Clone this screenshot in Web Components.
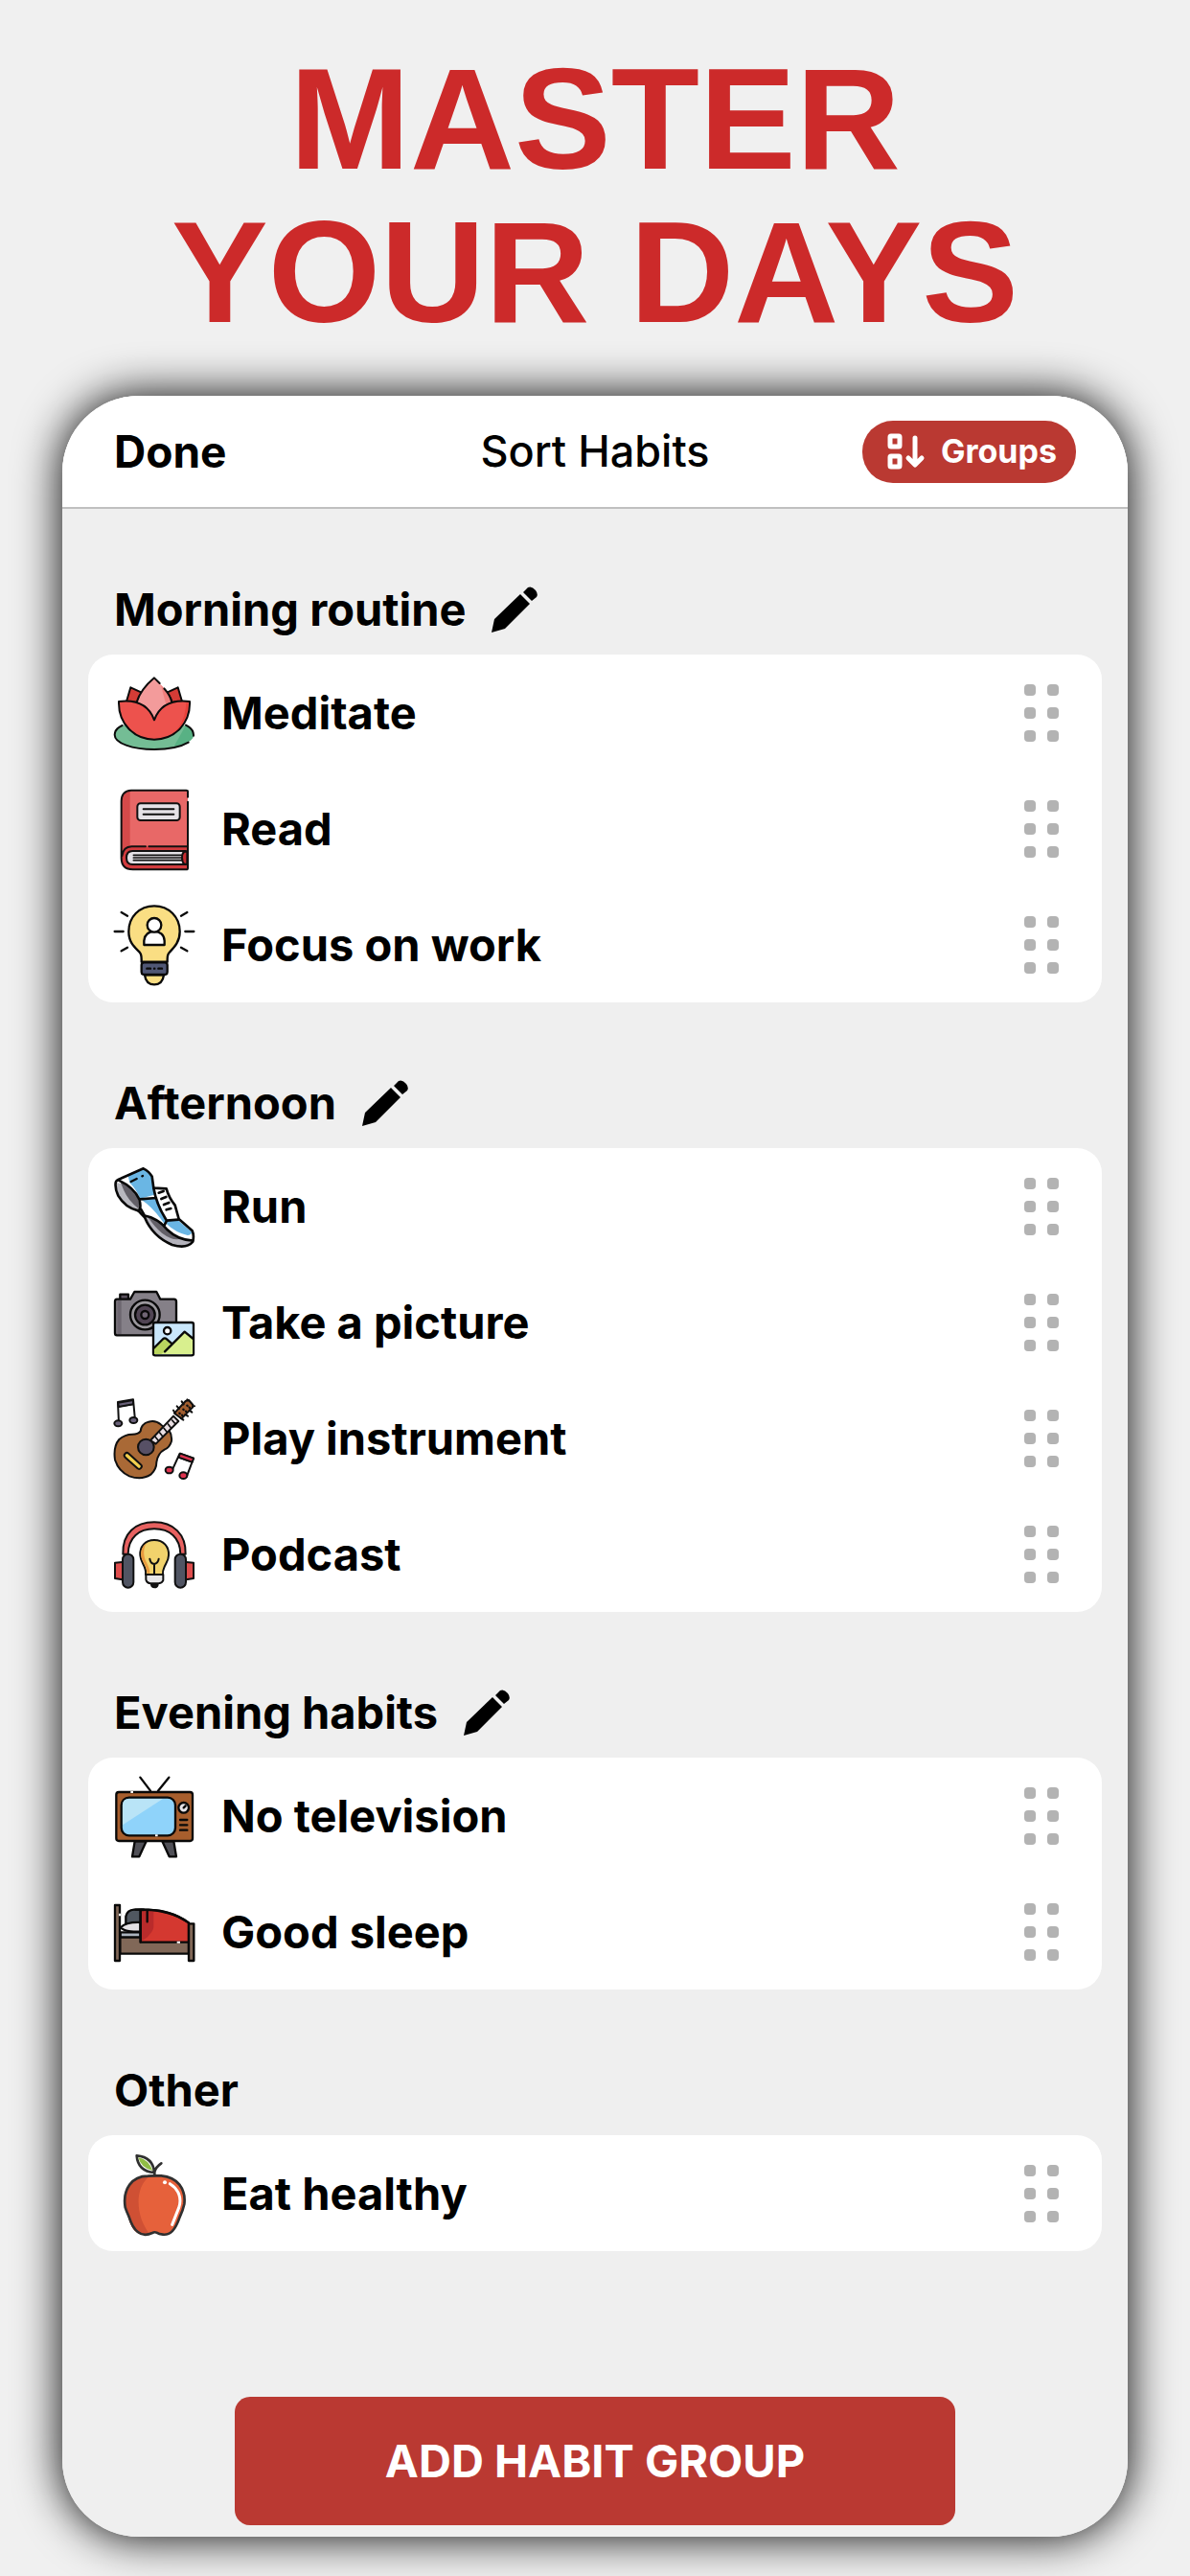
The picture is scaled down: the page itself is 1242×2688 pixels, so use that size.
<!DOCTYPE html>
<html lang="en">
<head>
<meta charset="utf-8">
<meta name="viewport" content="width=device-width, initial-scale=1">
<title>Master your days</title>
<style>
  body { margin: 0; background: #f0f0f0; color: #000; font-family: Inter, "Liberation Sans", sans-serif; }
</style>
</head>
<body>
<promo-page>
  <span slot="headline">MASTER<br>YOUR DAYS</span>
  <sort-bar heading="Sort Habits"></sort-bar>
  <habit-group name="Morning routine" editable>
    <habit-row icon="lotus">Meditate</habit-row>
    <habit-row icon="book">Read</habit-row>
    <habit-row icon="focus">Focus on work</habit-row>
  </habit-group>
  <habit-group name="Afternoon" editable>
    <habit-row icon="shoe">Run</habit-row>
    <habit-row icon="camera">Take a picture</habit-row>
    <habit-row icon="guitar">Play instrument</habit-row>
    <habit-row icon="podcast">Podcast</habit-row>
  </habit-group>
  <habit-group name="Evening habits" editable>
    <habit-row icon="tv">No television</habit-row>
    <habit-row icon="bed">Good sleep</habit-row>
  </habit-group>
  <habit-group name="Other">
    <habit-row icon="apple">Eat healthy</habit-row>
  </habit-group>
  <add-button>ADD HABIT GROUP</add-button>
</promo-page>

<script>
const RESET = `*{box-sizing:border-box} button{font:inherit;color:inherit;background:none;border:0;padding:0;margin:0;cursor:pointer}`;

const ICONS = {
lotus: ['57 32 252 252', `
  <g stroke="#0b0b0b" stroke-width="6" stroke-linejoin="round" stroke-linecap="round">
  <ellipse cx="183" cy="226" rx="124" ry="46" fill="#74bd95" stroke="none"/>
  <path d="M306 222C300 205 291 200 282 196L245 262C280 256 307 243 306 222Z" fill="#58b184" stroke="none"/>
  <path d="M290 250C266 264 228 272 183 272C114 272 59 252 59 226C59 214 68 204 83 197M282 196C298 204 307 214 306 229" fill="none"/>
  <path d="M96 122L109 78L150 97L135 125ZM270 122L257 78L216 97L231 125Z" fill="#d43c36"/>
  <path d="M200 65L183 48C158 69 138 92 128 124L183 182L238 124C234 108 226 95 214 82" fill="#f39b9b"/>
  <path d="M204 70C220 86 232 103 238 124L222 137C214 111 209 91 204 70Z" fill="#f07f7d" stroke="none"/>
  <path d="M214 82C226 95 234 108 238 124" fill="none"/>
  <path d="M72 122C122 116 165 130 183 180C201 130 244 116 294 122C297 193 244 241 183 241C122 241 70 193 72 122Z" fill="#ed524d"/>
  <path d="M283 126C281 169 266 204 240 222C272 204 289 166 289 126Z" fill="#e9413a" stroke="none"/></g>`],
book: ['57 395 252 252', `
  <path d="M110 400H288V648H115Q80 648 80 612V430Q82 402 110 400Z" fill="#e86867"/>
  <path d="M80 430Q82 402 107 400V580Q86 586 80 600Z" fill="#d64a4a"/>
  <path d="M288 577V648H115Q80 648 80 613Q80 577 112 577Z" fill="#d23b3e"/>
  <path d="M272 592H115Q96 592 96 611Q96 631 115 631H272Z" fill="#e4e2e7"/>
  <g fill="none" stroke="#111" stroke-width="6" stroke-linecap="round" stroke-linejoin="round">
  <path d="M288 421V404Q288 400 283 400H111Q80 402 80 434V612Q80 648 116 648H283Q288 648 288 643V436M82 605Q86 577 112 576H156M166 576H286M282 590H115Q96 590 96 611Q96 632 115 632H282"/>
  <path d="M118 603H268M118 611H268M118 619H268" stroke-width="5"/>
  <path d="M286 592H277Q270 597 270 611Q270 625 277 631H286Z" fill="#c52c30"/>
  <rect x="130" y="441" width="133" height="53" rx="10" fill="#e5e2e7"/>
  <path d="M149 459H244M149 475H244"/></g>`],
focus: ['57 759 252 252', `
  <g stroke="#090909" stroke-width="7" stroke-linecap="round" stroke-linejoin="round">
  <path d="M183 763C136 763 103 798 103 843C103 876 119 890 137 908Q143 914 143 930V938H224V930Q224 914 231 908C248 890 263 874 263 843C263 798 229 763 183 763Z" fill="#fade83"/>
  <path d="M153 979Q157 1009 183 1009Q209 1009 213 979Z" fill="#fade83"/>
  <rect x="143" y="940" width="81" height="38" rx="8" fill="#505775"/>
  <path d="M160 959H171M183 959H184M196 959H207" fill="none"/>
  <path d="M59 843H86M280 843H307M80 783L99 794M286 783L267 794M80 904L99 893M286 904L267 893" fill="none"/>
  <path d="M151 885V872C153 852 166 843 183 843C201 843 214 853 215 872V885Z" fill="#fff"/>
  <circle cx="183" cy="823" r="22" fill="#fff"/></g>`],
shoe: ['57 48 252 252', `
  <path d="M62 100Q64 91 78 86L148 54Q166 64 176 80L181 116L221 118L248 164L260 213L302 251Q309 270 303 286Q280 306 240 296Q180 270 153 210L133 187Q88 174 68 136Z" fill="#fff"/>
  <path d="M101 79L148 56Q169 67 175 83L182 113L183 137L139 149Q126 120 106 99Z" fill="#6ab6e4"/>
  <path d="M143 153L191 147L221 218L215 229Q180 177 143 153Z" fill="#6ab6e4"/>
  <path d="M222 220L257 217L301 254Q299 263 287 264Q250 256 222 229Z" fill="#6ab6e4"/>
  <path d="M65 99Q100 105 116 128Q136 150 133 184Q96 176 76 145Q61 120 65 99Z" fill="#b8b8bf"/>
  <path d="M76 95Q108 108 126 137Q139 157 134 181Q101 155 88 124Z" fill="#625f67"/>
  <path d="M154 207Q198 214 220 247Q253 278 303 285Q278 306 232 292Q179 268 154 207Z" fill="#b4b3bc"/>
  <path d="M166 210Q201 216 222 248Q239 264 268 274Q244 284 207 257Q181 235 166 210Z" fill="#625f67"/>
  <g fill="none" stroke="#080808" stroke-width="8" stroke-linecap="round" stroke-linejoin="round">
  <path d="M62 101Q61 92 78 86L149 55Q167 64 176 80L181 116L221 118Q228 145 248 170L260 213L302 250Q309 266 303 285Q285 307 239 294Q178 268 153 208L133 187Q92 178 70 140Q60 119 62 101Z"/>
  <path d="M72 92Q119 114 136 151Q144 180 133 187L141 182L153 203Q196 211 223 246Q258 279 304 281M138 151L189 147M181 116Q190 169 222 218L215 232M222 218L258 215"/>
  <path d="M197 131L212 126M205 150L220 144M213 168L229 162M221 184L235 180"/>
  <path d="M110 96L128 87M145 79L147 78" stroke-width="7"/></g>`],
camera: ['57 411 252 252', `
  <g stroke="#090909" stroke-width="7" stroke-linejoin="round">
  <path d="M76 464V449H102V464" fill="#59505c"/>
  <path d="M66 464H108L121 441H190L202 464H245Q252 464 252 472V570Q252 577 245 577H66Q60 577 60 570V472Q60 464 66 464Z" fill="#858088"/>
  <path d="M67 468H80V573H67Z" fill="#6d6670" stroke="none"/>
  <circle cx="154" cy="513" r="46" fill="#9b989d"/>
  <circle cx="154" cy="513" r="31" fill="#504453"/><circle cx="154" cy="513" r="12" fill="#706574"/>
  <rect x="180" y="537" width="126" height="103" rx="6" fill="#c9e7fb"/>
  <path d="M183 616L216 586L240 604L278 567L303 588V636H183Z" fill="#d8ef8e" stroke="none"/>
  <path d="M183 636V614L216 586L235 601L217 627L205 636Z" fill="#bad55f" stroke="none"/>
  <path d="M181 618L211 588Q216 584 222 589L239 604M216 628L278 566L305 588" fill="none" stroke-linecap="round"/>
  <circle cx="224" cy="563" r="11" fill="#fff"/></g>`],
guitar: ['57 55 252 252', `
  <g stroke="#101010" stroke-linejoin="round" stroke-linecap="round" stroke-width="6">
  <path d="M140 158Q142 136 165 129Q187 123 203 137Q215 149 229 155Q239 169 237 189Q232 208 215 216Q194 227 190 256Q190 278 172 294Q143 313 105 299Q70 283 60 247Q54 207 73 184Q91 168 114 168Q133 168 140 158Z" fill="#a96936"/>
  <path d="M171 187L243 111L259 127L188 198Z" fill="#e9dfe3"/>
  <path d="M186 176L196 188M200 163L209 174M213 149L222 160M226 136L235 147M239 124L248 134" stroke-width="5"/>
  <path d="M246 102L281 64L291 61L304 76L303 84L268 119Z" fill="#a25e2f"/>
  <path d="M248 101L243 93M261 88L254 80M275 74L269 65M289 62L286 59M266 117L274 123M280 106L288 111M293 93L301 99M303 80L309 80" fill="none"/>
  <path d="M262 102L263 103M274 90L275 91M286 78L287 79M270 108L271 109M282 96L283 97M293 84L294 85" stroke-width="7"/>
  <circle cx="157" cy="208" r="25" fill="#575065"/>
  <rect x="83" y="243" width="67" height="16" rx="8" fill="#f2cf4e" transform="rotate(42 116 251)"/>
  <path d="M72 134L69 67L117 59L123 124M70 81L118 73" fill="none"/>
  <path d="M70 69L117 61V74L71 82Z" fill="#686078"/>
  <ellipse cx="70" cy="134" rx="12" ry="9" fill="#686078"/><ellipse cx="118" cy="124" rx="12" ry="9" fill="#686078"/>
  <path d="M240 278L263 228L306 243L286 296M259 240L301 255" fill="none"/>
  <path d="M264 228L306 243L302 255L259 240Z" fill="#de344f"/>
  <ellipse cx="230" cy="280" rx="12" ry="10" fill="#de344f"/><ellipse cx="274" cy="297" rx="12" ry="10" fill="#de344f"/></g>`],
podcast: ['57 418 252 252', `
  <g stroke="#101010" stroke-width="6" stroke-linecap="round" stroke-linejoin="round">
  <path d="M85 543C83 477 124 443 183 443C242 443 283 480 281 543H265C264 491 231 464 183 464C135 464 102 491 101 543Z" fill="#e76160"/>
  <path d="M83 568L60 570V619L83 623M283 568L306 570V619L283 623" fill="#df4d4d"/>
  <rect x="84" y="543" width="34" height="105" rx="17" fill="#515563"/><rect x="248" y="543" width="34" height="105" rx="17" fill="#515563"/>
  <path d="M183 499C154 499 137 520 139 547C140 565 150 575 154 588Q157 596 156 607H210Q209 596 213 588C217 574 228 565 228 547C230 520 212 499 183 499Z" fill="#f1d26c"/>
  <path d="M161 507C142 519 137 540 145 561C153 576 160 585 160 603H169C170 582 153 567 151 545C150 526 153 515 161 507Z" fill="#e89a3f" stroke="none"/>
  <path d="M169 558Q171 573 183 574Q195 572 197 558M183 574V604" fill="none"/>
  <path d="M157 607H211V625Q208 634 197 635H170Q159 633 157 623Z" fill="#e8e7e9"/>
  <path d="M174 639H194Q192 647 184 647Q175 646 174 639Z" fill="#222"/></g>`],
tv: ['57 39 252 252', `
  <g stroke="#090909" stroke-width="7" stroke-linecap="round" stroke-linejoin="round">
  <path d="M171 86L139 44M195 86L229 44" fill="none"/>
  <path d="M122 244L114 292H136L158 244ZM208 244L230 292H252L244 244Z" fill="#505057"/>
  <rect x="64" y="90" width="239" height="153" rx="8" fill="#a75e2d"/>
  <rect x="80" y="107" width="169" height="119" rx="24" fill="#8fd3fa"/>
  <path d="M84 193V130Q85 111 104 111H210Z" fill="#b9e4f7" stroke="none"/>
  <circle cx="275" cy="139" r="16" fill="#e7e5e9"/><path d="M275 139L281 133" fill="none"/>
  <path d="M264 177H286M264 193H286M264 209H286" fill="none"/></g>
  <path d="M109 90H117M186 226H194" stroke="#fff" stroke-width="6"/>`],
bed: ['57 401 252 252', `
  <g stroke="#090909" stroke-width="7" stroke-linecap="round" stroke-linejoin="round">
  <path d="M76 543H291V595H76Z" fill="#816858"/>
  <path d="M77 528H140V543H77Z" fill="#abb4bf"/>
  <path d="M94 502V478Q98 459 120 457H150V502Z" fill="#505760"/>
  <path d="M140 497C114 496 89 501 78 513C90 526 114 526 140 526Z" fill="#e4e1e5"/>
  <path d="M140 459C199 453 249 468 291 498V559H140Z" fill="#d43830"/>
  <path d="M144 463H181V512C179 526 170 531 162 543L144 555Z" fill="#b92b2b" stroke="none"/>
  <path d="M140 460V558M161 460V495M124 457C193 454 246 466 291 498" fill="none"/>
  <path d="M60 443H75V617H60ZM291 501H307V617H291Z" fill="#816858"/></g>
  <path d="M75 469V477M254 559H264" stroke="#fff" stroke-width="6"/>`],
apple: ['57 232 252 252', `
  <path d="M184 301H213C260 310 286 349 278 392L259 447C244 488 219 495 184 480C148 495 121 486 107 448L90 397C83 345 113 306 153 304Z" fill="#e6613b"/>
  <path d="M168 304C111 304 83 350 90 397L107 448C118 482 143 491 169 485C145 454 132 418 134 374Q138 326 168 304Z" fill="#cf5034"/>
  <g fill="none" stroke="#303030" stroke-width="8" stroke-linecap="round" stroke-linejoin="round">
  <path d="M184 302H205C255 306 283 343 277 391Q273 410 263 431C248 474 233 488 210 486Q198 485 190 480Q184 477 177 481C140 499 117 472 104 431Q96 413 92 401C83 344 113 303 163 303Z"/>
  <path d="M184 301V290Q187 275 205 263M183 292Q180 244 128 239Q132 288 183 292Z"/></g>
  <path d="M133 245Q165 251 178 286Q142 279 133 245Z" fill="#91bd45"/>
  <path d="M232 327C260 344 270 374 260 402L239 455" fill="none" stroke="#fff" stroke-width="9" stroke-linecap="round"/><circle cx="216" cy="323" r="6" fill="#fff"/>`]
};

class PromoPage extends HTMLElement {
  constructor() {
    super();
    this.attachShadow({ mode: 'open' }).innerHTML = `
      <style>${RESET}
        :host { display: flex; flex-direction: column; }
        h1 { margin: 0; padding: 44px 16px 49px; text-align: center; color: #cc2a2a;
             font: 700 151px/160px "Liberation Sans", sans-serif; }
        .shade { margin: 0 65px 41px; border-radius: 80px; box-shadow: 0 0 48px #000; }
        main { border-radius: 80px; background: #efefef; overflow: hidden; }
      </style>
      <h1><slot name="headline"></slot></h1>
      <div class="shade"><main><slot></slot></main></div>`;
  }
}

class SortBar extends HTMLElement {
  constructor() {
    super();
    this.attachShadow({ mode: 'open' }).innerHTML = `
      <style>${RESET}
        :host { display: block; background: #fff; border-bottom: 2px solid #c0c0c0; }
        header { display: grid; grid-template-columns: 1fr auto 1fr; align-items: center;
                 height: 116px; padding: 0 54px; font-size: 46px; line-height: 56px; }
        .done { justify-self: start; font-weight: 700; }
        h2 { margin: 0; font-size: 45px; font-weight: 500; }
        .groups { justify-self: end; display: flex; align-items: center; gap: 16px; height: 65px;
                  padding: 0 20px 0 26px; border-radius: 32px; background: #ba3932; color: #fff;
                  font-size: 34px; font-weight: 700; line-height: 40px; }
        svg { display: block; width: 40px; height: 38px; }
      </style>
      <header>
        <button class="done">Done</button>
        <h2></h2>
        <button class="groups">
          <svg viewBox="0 0 40 38" fill="none" stroke="#fff" aria-hidden="true">
            <rect x="3" y="3" width="10" height="11" rx="1" stroke-width="5"/>
            <rect x="3" y="24" width="10" height="11" rx="1" stroke-width="5"/>
            <path d="M29 5V32M22 26L29 33L36 26" stroke-width="5" stroke-linecap="round" stroke-linejoin="round"/>
          </svg>Groups</button>
      </header>`;
  }
  connectedCallback() { this.shadowRoot.querySelector('h2').textContent = this.getAttribute('heading'); }
}

class HabitGroup extends HTMLElement {
  constructor() {
    super();
    this.attachShadow({ mode: 'open' }).innerHTML = `
      <style>${RESET}
        :host { display: block; padding: 0 27px; }
        .head { display: flex; align-items: center; gap: 27px; height: 152px; padding: 58px 27px 0; }
        h3 { margin: 0; font-size: 47px; font-weight: 700; line-height: 56px; }
        button { display: block; width: 48px; height: 48px; }
        button[hidden] { display: none; }
        svg { display: block; width: 48px; height: 48px; }
        .card { border-radius: 26px; background: #fff; overflow: hidden; }
      </style>
      <section>
        <div class="head"><h3></h3>
          <button aria-label="Edit group" hidden><svg viewBox="0 0 48 48" aria-hidden="true">
            <path d="M0 48L3 34L30 8L40 18L14 44ZM33 6L38 1Q42 -1 46 4Q49 8 47 11L42 15Z"/></svg></button>
        </div>
        <div class="card" role="list"><slot></slot></div>
      </section>`;
  }
  connectedCallback() {
    this.shadowRoot.querySelector('h3').textContent = this.getAttribute('name');
    this.shadowRoot.querySelector('button').hidden = !this.hasAttribute('editable');
  }
}

class HabitRow extends HTMLElement {
  constructor() {
    super();
    this.attachShadow({ mode: 'open' }).innerHTML = `
      <style>${RESET}
        :host { display: flex; align-items: center; height: 121px; padding: 0 45px 0 27px;
                font-size: 47px; font-weight: 700; line-height: 56px; }
        .icon { flex: none; width: 84px; height: 84px; overflow: visible; margin-right: 28px; }
        .label { flex: 1; }
        .grip { display: grid; grid-template-columns: 12px 12px; gap: 12px; }
        i { width: 12px; height: 12px; border-radius: 4px; background: #b3b3b3; }
      </style>
      <svg class="icon" aria-hidden="true"></svg>
      <span class="label"><slot></slot></span>
      <button class="grip" aria-label="Reorder"><i></i><i></i><i></i><i></i><i></i><i></i></button>`;
  }
  connectedCallback() {
    this.setAttribute('role', 'listitem');
    const [box, art] = ICONS[this.getAttribute('icon')];
    const svg = this.shadowRoot.querySelector('.icon');
    svg.setAttribute('viewBox', box);
    svg.innerHTML = art;
  }
}

class AddButton extends HTMLElement {
  constructor() {
    super();
    this.attachShadow({ mode: 'open' }).innerHTML = `
      <style>${RESET}
        :host { display: flex; justify-content: center; padding: 152px 180px 12px; }
        button { flex: 1; height: 134px; border-radius: 16px; background: #ba3932; color: #fff;
                 font-size: 47px; font-weight: 700; line-height: 56px; }
      </style>
      <button><slot></slot></button>`;
  }
}

customElements.define('promo-page', PromoPage);
customElements.define('sort-bar', SortBar);
customElements.define('habit-group', HabitGroup);
customElements.define('habit-row', HabitRow);
customElements.define('add-button', AddButton);
</script>
</body>
</html>
